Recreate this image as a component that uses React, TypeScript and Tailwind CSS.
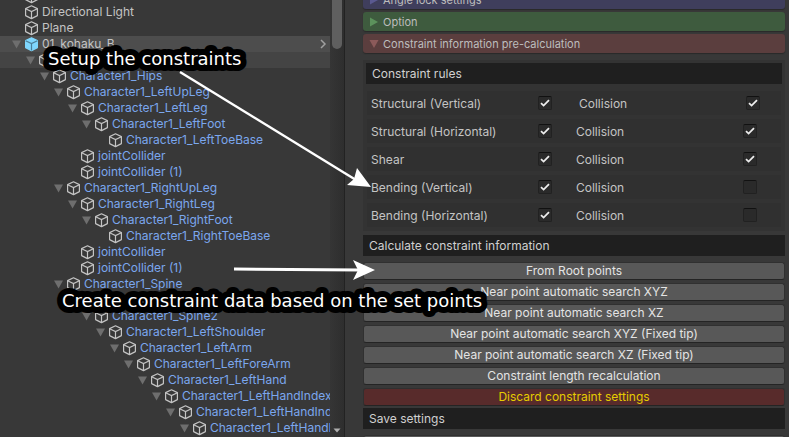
import React from "react";

type Node = { name: string; depth: number; leaf?: boolean; plain?: boolean };

const nodes: Node[] = [
  { name: "Main Camera", depth: 0, leaf: true, plain: true },
  { name: "Directional Light", depth: 0, leaf: true, plain: true },
  { name: "Plane", depth: 0, leaf: true, plain: true },
  { name: "01_kohaku_B", depth: 0, plain: true },
  { name: "", depth: 1 },
  { name: "Character1_Hips", depth: 2 },
  { name: "Character1_LeftUpLeg", depth: 3 },
  { name: "Character1_LeftLeg", depth: 4 },
  { name: "Character1_LeftFoot", depth: 5 },
  { name: "Character1_LeftToeBase", depth: 6, leaf: true },
  { name: "jointCollider", depth: 4, leaf: true },
  { name: "jointCollider (1)", depth: 4, leaf: true },
  { name: "Character1_RightUpLeg", depth: 3 },
  { name: "Character1_RightLeg", depth: 4 },
  { name: "Character1_RightFoot", depth: 5 },
  { name: "Character1_RightToeBase", depth: 6, leaf: true },
  { name: "jointCollider", depth: 4, leaf: true },
  { name: "jointCollider (1)", depth: 4, leaf: true },
  { name: "Character1_Spine", depth: 3 },
  { name: "", depth: 4 },
  { name: "Character1_Spine2", depth: 5 },
  { name: "Character1_LeftShoulder", depth: 6 },
  { name: "Character1_LeftArm", depth: 7 },
  { name: "Character1_LeftForeArm", depth: 8 },
  { name: "Character1_LeftHand", depth: 9 },
  { name: "Character1_LeftHandIndex1", depth: 10 },
  { name: "Character1_LeftHandIndex2", depth: 11 },
  { name: "Character1_LeftHandIndex3", depth: 12 },
];

const rules = [
  { name: "Structural (Vertical)", on: true, collision: true },
  { name: "Structural (Horizontal)", on: true, collision: true },
  { name: "Shear", on: true, collision: true },
  { name: "Bending (Vertical)", on: true, collision: false },
  { name: "Bending (Horizontal)", on: true, collision: false },
];

const actions = [
  "From Root points",
  "Near point automatic search XYZ",
  "Near point automatic search XZ",
  "Near point automatic search XYZ (Fixed tip)",
  "Near point automatic search XZ (Fixed tip)",
  "Constraint length recalculation",
];

function Cube({ solid }: { solid: boolean }) {
  return (
    <svg viewBox="0 0 15 16" className="h-4 w-[15px] shrink-0" aria-hidden="true">
      <path
        d="M7.5 1.8 L13.4 4.6 V11.6 L7.5 14.6 L1.6 11.6 V4.6 Z"
        fill={solid ? "#7fd6fd" : "none"}
        stroke={solid ? "#7fd6fd" : "#c4c4c4"}
        strokeWidth="1.2"
        strokeLinejoin="round"
      />
      <path
        d="M1.6 4.8 L7.5 7.6 L13.4 4.8 M7.5 7.6 V14.6"
        fill="none"
        stroke={solid ? "#4b7f99" : "#c4c4c4"}
        strokeWidth="1.2"
      />
    </svg>
  );
}

function TreeRow({ node, index }: { node: Node; index: number }) {
  const bg = index === 3 ? "bg-[#4d4d4d]" : index === 4 ? "bg-[#444444]" : "";
  return (
    <li className={`flex h-4 items-center ${bg}`} style={{ paddingLeft: 11 + node.depth * 14 }}>
      <svg viewBox="0 0 11 10" className="mr-0.5 h-2.5 w-[11px] shrink-0" aria-hidden="true">
        {!node.leaf && <path d="M1 1.5 H10 L5.5 9.5 Z" fill="#6e6e6e" />}
      </svg>
      <Cube solid={index === 3} />
      <span
        className={`ml-[3px] whitespace-nowrap text-[12px] leading-4 ${
          node.plain ? "text-[#c4c4c4]" : "text-[#7ba7ee]"
        }`}
      >
        {node.name}
      </span>
      {index === 3 && (
        <svg viewBox="0 0 8 10" className="mr-[3px] ml-auto h-2.5 w-2" aria-hidden="true">
          <path d="M2 1 L6 5 L2 9" fill="none" stroke="#a0a0a0" strokeWidth="1.5" />
        </svg>
      )}
    </li>
  );
}

function Foldout({ title, tone, arrow, open }: { title: string; tone: string; arrow: string; open?: boolean }) {
  return (
    <button
      type="button"
      className={`flex h-[19px] w-full items-center rounded-[3px] pt-px pl-1.5 text-left text-[11px] text-[#bdbdbd] shadow-[0_1px_1px_#2a2a2a] ${tone}`}
    >
      <svg viewBox="0 0 10 10" className="mr-1 h-2.5 w-2.5" aria-hidden="true">
        <path d={open ? "M0.5 1 H9.5 L5 9 Z" : "M1 0.5 V9.5 L9 5 Z"} fill={arrow} />
      </svg>
      {title}
    </button>
  );
}

function Check({ id, checked }: { id: string; checked: boolean }) {
  return (
    <span className="grid size-3.5 shrink-0">
      <input
        id={id}
        type="checkbox"
        defaultChecked={checked}
        className="peer col-start-1 row-start-1 size-3.5 appearance-none rounded-[2px] border border-[#212121] border-t-[#111111] bg-[#2a2a2a]"
      />
      <svg
        viewBox="0 0 14 14"
        className="pointer-events-none invisible col-start-1 row-start-1 size-3.5 peer-checked:visible"
        aria-hidden="true"
      >
        <path d="M3 7.2 L5.6 9.6 L11 4.2" fill="none" stroke="#ececec" strokeWidth="1.8" />
      </svg>
    </span>
  );
}

function Arrows() {
  return (
    <svg className="pointer-events-none absolute top-0 left-0 h-[437px] w-[500px]" viewBox="0 0 500 437">
      <g fill="#fff" stroke="#fff">
        <path d="M180 72 L356 180" strokeWidth="2.4" />
        <path d="M371 187 L357 168 L354 179 L347 185 Z" stroke="none" />
        <path d="M234 269 L360 270" strokeWidth="3" />
        <path d="M375 270 L353 260 L358 270 L353 280 Z" stroke="none" />
      </g>
      <g
        fill="#fff"
        stroke="#000"
        strokeWidth="12"
        strokeLinejoin="round"
        className="font-['DejaVu_Sans',sans-serif] text-[18px] [paint-order:stroke]"
      >
        <text x="48" y="65">Setup the constraints</text>
        <text x="62" y="307">Create constraint data based on the set points</text>
      </g>
    </svg>
  );
}

export default function App() {
  return (
    <div className="relative flex h-screen overflow-hidden bg-[#383838] font-['Inter',sans-serif] text-[12px] text-[#c4c4c4]">
      <nav className="w-[330px] shrink-0 overflow-hidden" aria-label="Hierarchy">
        <ul className="-mt-3">
          {nodes.map((n, i) => (
            <TreeRow key={i} node={n} index={i} />
          ))}
        </ul>
      </nav>
      <div className="flex w-[15px] shrink-0 flex-col items-center justify-between border-r border-[#222222] bg-linear-to-r from-[#353535] to-[#2e2e2e]">
        <div className="h-[49px] w-2.5 rounded-b-full bg-[#5f5f5f]" />
        <svg viewBox="0 0 8 5" className="mb-1 h-[5px] w-2" aria-hidden="true">
          <path d="M0.5 0.5 H7.5 L4 4.5 Z" fill="#b0b0b0" />
        </svg>
      </div>
      <main className="min-w-0 grow overflow-hidden pr-1 pl-[18px]">
        <div className="-mt-2.5 flex flex-col gap-[3px]">
          <Foldout title="Angle lock settings" tone="bg-[#3f3e5c]" arrow="#5a5990" />
          <Foldout title="Option" tone="bg-[#3e5b3e]" arrow="#5c925c" />
          <Foldout title="Constraint information pre-calculation" tone="bg-[#5b3e3e]" arrow="#8c5a5a" open />
        </div>
        <section className="mt-[7px] bg-[#333333] px-[3px] pt-[3px] pb-1">
          <h2 className="mb-[7px] h-[21px] bg-[#1f1f1f] pl-1.5 leading-[21px] text-[#d0d0d0]">
            Constraint rules
          </h2>
          <div className="flex flex-col gap-1 px-px">
            {rules.map((r, i) => (
              <div key={r.name} className="flex h-6 items-center bg-[#303030] pl-1">
                <label htmlFor={`rule-${i}`} className="w-[167px] shrink-0 pt-0.5">
                  {r.name}
                </label>
                <Check id={`rule-${i}`} checked={r.on} />
                <label htmlFor={`col-${i}`} className={`grow pt-0.5 ${i === 0 ? "pl-[27px]" : "pl-6"}`}>
                  Collision
                </label>
                <span className={i === 0 ? "pr-[21px]" : "pr-6"}>
                  <Check id={`col-${i}`} checked={r.collision} />
                </span>
              </div>
            ))}
          </div>
        </section>
        <h2 className="mt-1 h-[21px] bg-[#1f1f1f] pl-1.5 leading-[21px] text-[#d0d0d0]">
          Calculate constraint information
        </h2>
        <div className="mt-1.5 flex flex-col gap-[3px]">
          {actions.map((a) => (
            <button
              key={a}
              type="button"
              className="h-[18px] rounded-[3px] border border-[#303030] border-b-[#242424] bg-[#585858] leading-4 text-[#e4e4e4]"
            >
              {a}
            </button>
          ))}
          <button
            type="button"
            className="h-[18px] rounded-[3px] border border-[#303030] border-b-[#242424] bg-[#582b2b] leading-4 text-[#e5cc00]"
          >
            Discard constraint settings
          </button>
        </div>
        <h2 className="mt-0.5 h-[21px] bg-[#1f1f1f] pl-1.5 leading-[21px] text-[#d0d0d0]">Save settings</h2>
        <div className="mt-1.5 h-[18px] rounded-[3px] border border-[#303030] bg-[#585858]" />
      </main>
      <Arrows />
    </div>
  );
}
